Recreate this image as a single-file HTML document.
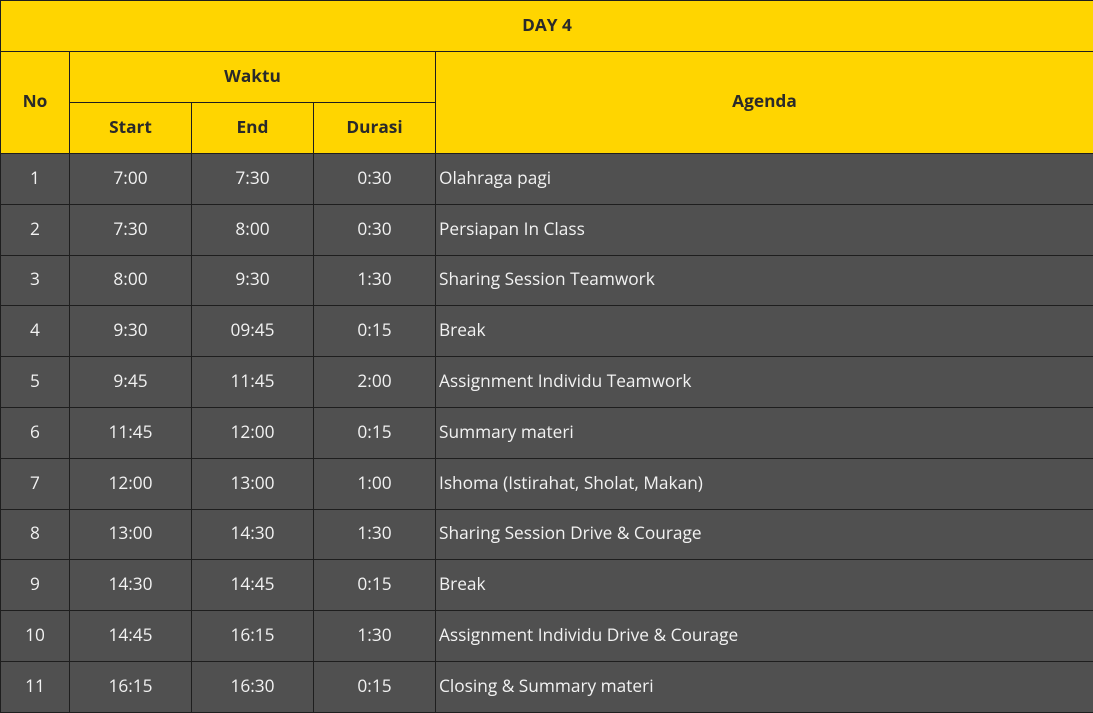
<!DOCTYPE html>
<html><head><meta charset="utf-8"><style>
body{margin:0;width:1093px;height:712px;overflow:hidden;background:#505050;font-family:"Open Sans","Liberation Sans","DejaVu Sans",sans-serif;}
.c{position:absolute;box-sizing:border-box;border:1px solid #1e1e1e;display:flex;align-items:center;justify-content:center;font-size:17.3px;color:#f2f2f2;background:#505050;padding-bottom:2px;}
.h{background:#FFD500;color:#2a2a2a;font-weight:bold;}
.l{justify-content:flex-start;padding-left:3px;}
</style></head><body>
<div id="t"></div>
<script>
var xs=[0,69,191,313,435,1093];
var ys=[153,204,255,305,356,407,458,509,559,610,661,712];
var d=[["1","7:00","7:30","0:30","Olahraga pagi"],["2","7:30","8:00","0:30","Persiapan In Class"],["3","8:00","9:30","1:30","Sharing Session Teamwork"],["4","9:30","09:45","0:15","Break"],["5","9:45","11:45","2:00","Assignment Individu Teamwork"],["6","11:45","12:00","0:15","Summary materi"],["7","12:00","13:00","1:00","Ishoma (Istirahat, Sholat, Makan)"],["8","13:00","14:30","1:30","Sharing Session Drive &amp; Courage"],["9","14:30","14:45","0:15","Break"],["10","14:45","16:15","1:30","Assignment Individu Drive &amp; Courage"],["11","16:15","16:30","0:15","Closing &amp; Summary materi"]];
var h="";
function cell(x0,y0,x1,y1,txt,cls){h+='<div class="c '+cls+'" style="left:'+x0+'px;top:'+y0+'px;width:'+(x1-x0+1)+'px;height:'+(y1-y0+1)+'px">'+txt+'</div>';}
cell(0,0,1093,51,"DAY 4","h");
cell(0,51,69,153,"No","h");
cell(69,51,435,102,"Waktu","h");
cell(69,102,191,153,"Start","h");
cell(191,102,313,153,"End","h");
cell(313,102,435,153,"Durasi","h");
cell(435,51,1093,153,"Agenda","h");
for(var i=0;i<11;i++){for(var j=0;j<5;j++){cell(xs[j],ys[i],xs[j+1],ys[i+1],d[i][j],j==4?"l":"");}}
document.getElementById("t").innerHTML=h;
</script>
</body></html>
